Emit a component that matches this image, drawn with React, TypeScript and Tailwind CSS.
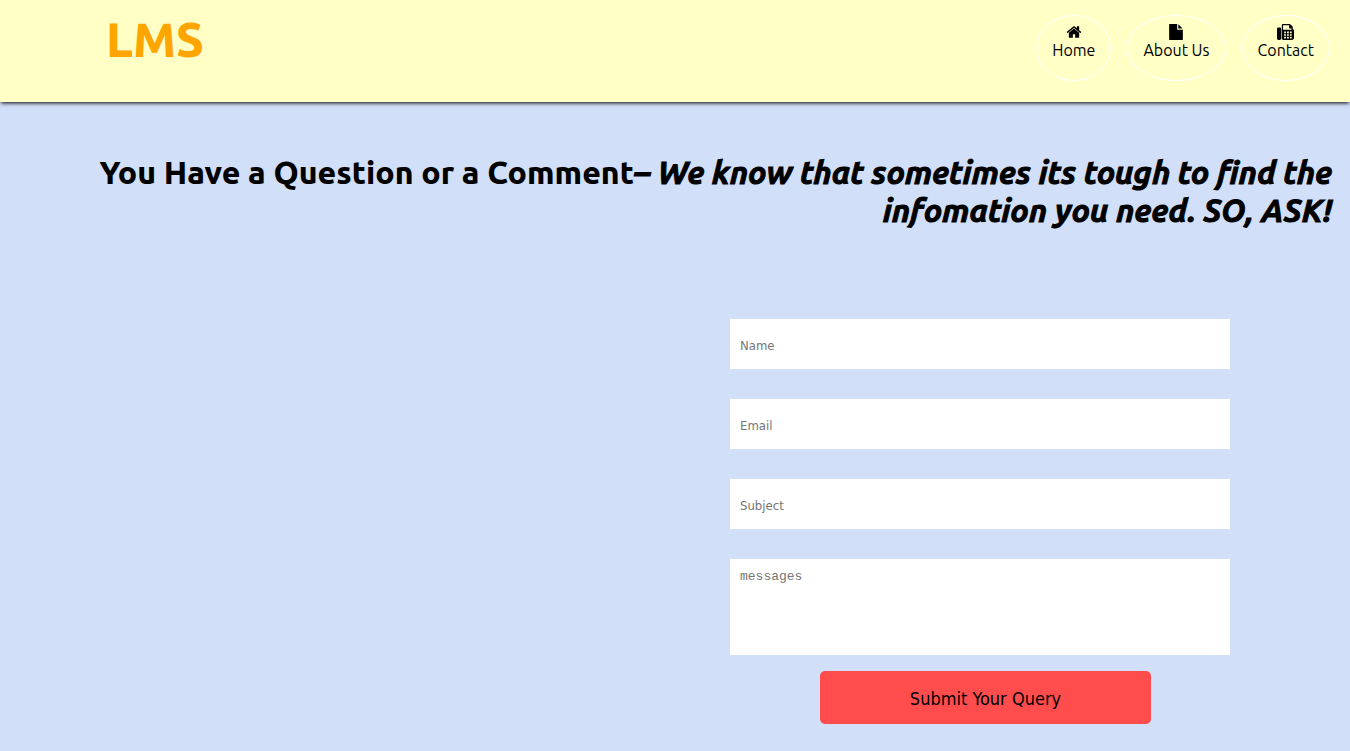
import type { ReactNode } from "react";

function HomeIcon() {
  return (
    <svg viewBox="0 0 1792 1792" className="size-4 fill-black" aria-hidden="true">
      <path d="M1472 992v480q0 26-19 45t-45 19h-384v-384h-256v384h-384q-26 0-45-19t-19-45v-480q0-1 .5-3t.5-3l575-474 575 474q1 2 1 6zm223-69l-62 74q-8 9-21 11h-3q-13 0-21-7l-692-577-692 577q-12 8-24 7-13-2-21-11l-62-74q-8-10-7-23.500t11-21.500l719-599q32-26 76-26t76 26l244 204v-195q0-14 9-23t23-9h192q14 0 23 9t9 23v408l219 182q10 8 11 21.500t-7 23.500z" />
    </svg>
  );
}

function FileIcon() {
  return (
    <svg viewBox="128 0 1536 1792" className="h-4 w-3.5 fill-black" aria-hidden="true">
      <path d="M1152 512v-472q22 14 36 28l408 408q14 14 28 36h-472zm-128 32q0 40 28 68t68 28h544v1056q0 40-28 68t-68 28h-1344q-40 0-68-28t-28-68v-1600q0-40 28-68t68-28h800v544z" />
    </svg>
  );
}

const faxKeys = [752, 1056, 1360].flatMap((x) => [848, 1136, 1424].map((y) => ({ x, y })));

function FaxIcon() {
  return (
    <svg viewBox="0 0 1792 1792" className="h-4 w-[17px]" preserveAspectRatio="none" aria-hidden="true">
      <path
        className="fill-black"
        fillRule="evenodd"
        d="M288 384q66 0 113 47t47 113v1088q0 66-47 113t-113 47h-128q-66 0-113-47t-47-113v-1088q0-66 47-113t113-47h128zM1664 547q58 34 93 93t35 128v768q0 106-75 181t-181 75h-864q-66 0-113-47t-47-113v-1536q0-40 28-68t68-28h672q40 0 88 20t76 48l152 152q28 28 48 76t20 88v163zM640 128v512h896v-128h-160q-40 0-68-28t-28-68v-288z"
      />
      {faxKeys.map(({ x, y }) => (
        <rect key={`${x}-${y}`} x={x} y={y} width="192" height="192" rx="16" fill="#ffffc6" />
      ))}
    </svg>
  );
}

function NavItem({ icon, label }: { icon: ReactNode; label: string }) {
  return (
    <a
      href="#"
      className="flex h-[66px] flex-col items-center rounded-[50%] border border-white px-[15px] pt-2 text-base leading-5 text-black"
    >
      {icon}
      {label}
    </a>
  );
}

const fieldClass =
  "block w-full bg-white px-2.5 outline-none placeholder:text-[#757575]";

export default function App() {
  return (
    <div className="min-h-screen bg-[#d2dff9] font-['Ubuntu','Noto_Sans',sans-serif] text-black">
      <header className="flex h-[102px] items-start justify-between bg-[#ffffc6] pt-[15px] pr-5 pl-[106px] shadow-[0_2px_4px_-1px_#000000]">
        <a href="#" className="text-5xl leading-[48px] font-extrabold text-[#ffa500]">
          LMS
        </a>
        <nav className="flex gap-4">
          <NavItem icon={<HomeIcon />} label="Home" />
          <NavItem icon={<FileIcon />} label="About Us" />
          <NavItem icon={<FaxIcon />} label="Contact" />
        </nav>
      </header>

      <main className="pt-[51px]">
        <h1 className="pr-[18px] pl-20 text-right text-[32px] leading-[38px] font-extrabold">
          You Have a Question or a Comment
          <i className="font-bold [-webkit-text-stroke:1px_#000000]">
            – We know that sometimes its tough to find the infomation you need. SO, ASK!
          </i>
        </h1>

        <form className="mt-[90px] mr-[120px] ml-auto w-[500px] max-w-full pb-[27px] font-['Tahoma','DejaVu_Sans_Condensed',sans-serif]">
          <div className="flex flex-col gap-[30px]">
            <input type="text" aria-label="Name" placeholder="Name" className={`${fieldClass} h-[50px] pt-0.5 text-[13px]`} />
            <input type="email" aria-label="Email" placeholder="Email" className={`${fieldClass} h-[50px] pt-0.5 text-[13px]`} />
            <input type="text" aria-label="Subject" placeholder="Subject" className={`${fieldClass} h-[50px] pt-0.5 text-[13px]`} />
            <textarea
              aria-label="Messages"
              placeholder="messages"
              className={`${fieldClass} h-24 resize-none pt-2.5 font-['Courier_New','Liberation_Mono',monospace] text-[13px] leading-4`}
            />
          </div>
          <button
            type="submit"
            className="mt-4 ml-[90px] block h-[53px] w-[331px] rounded-[5px] bg-[#ff4d4d] pt-0.5 text-lg"
          >
            Submit Your Query
          </button>
        </form>
      </main>
    </div>
  );
}
